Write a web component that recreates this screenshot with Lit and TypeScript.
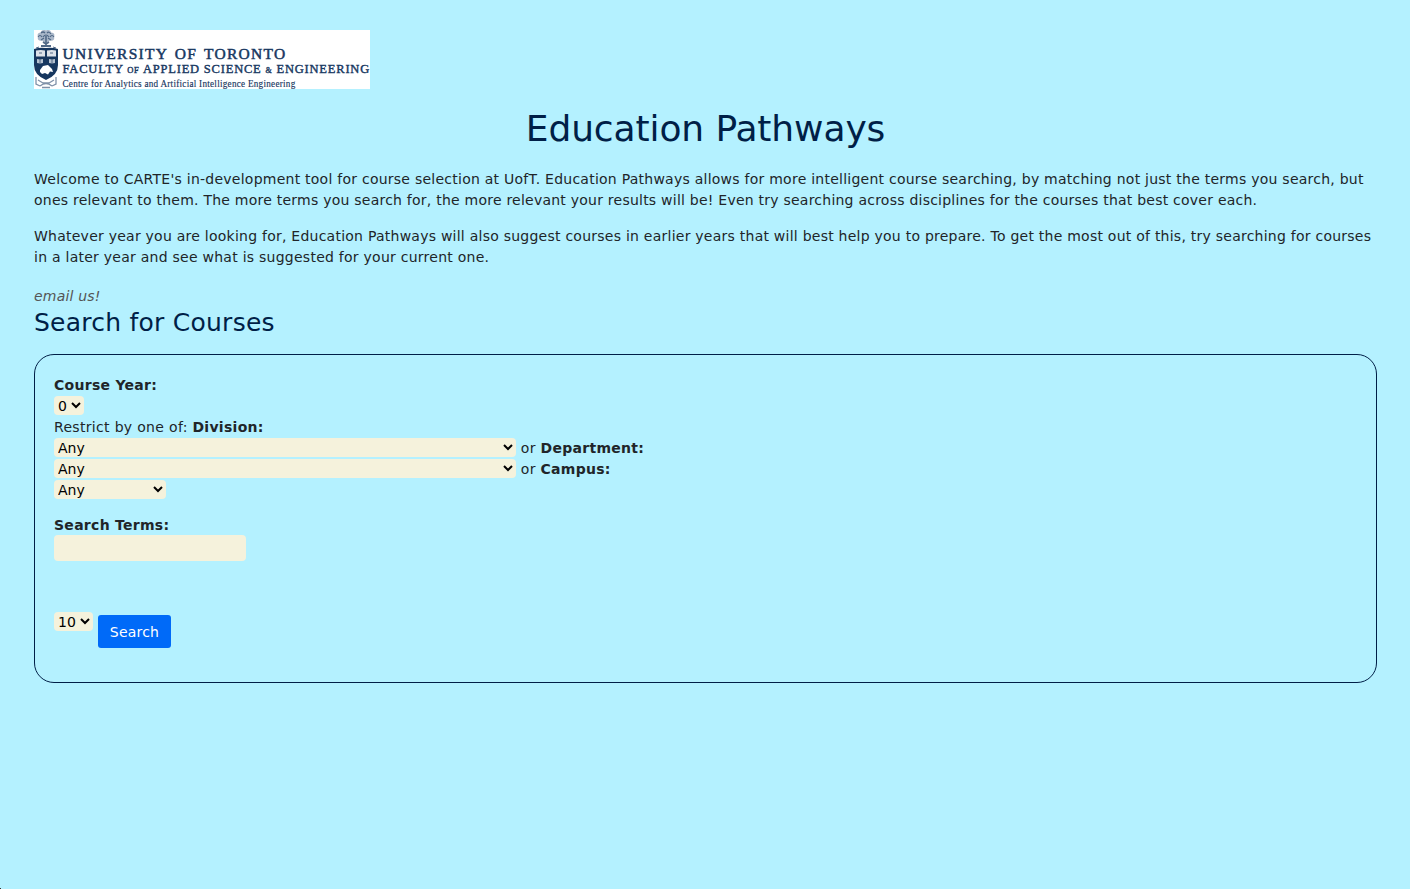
import { LitElement, html, css } from "lit";
import { customElement } from "lit/decorators.js";

@customElement("app-root")
export class AppRoot extends LitElement {
  static styles = css`
    * { box-sizing: border-box; }
    :host {
      display: block;
      min-height: 889px;
      padding: 30px 33px 0 34px;
      background: #b4f1ff;
      color: #212529;
      font: 14px/21px Verdana, "DejaVu Sans", sans-serif;
      letter-spacing: 0.28px;
    }
    .logo { display: block; width: 336px; height: 59px; background: #fff; }
    h1, h2, p { margin: 0; }
    h1 {
      margin-top: 18px;
      color: #001f47;
      font-size: 36px;
      line-height: 44px;
      font-weight: 400;
      text-align: center;
      letter-spacing: -0.1px;
    }
    .intro { margin-top: 18px; }
    .intro + .intro { margin-top: 15px; }
    .line { display: block; white-space: nowrap; }
    .l1 { letter-spacing: 0.247px; }
    .l2 { letter-spacing: 0.234px; }
    .l3 { letter-spacing: 0.243px; }
    .l4 { letter-spacing: 0.253px; }
    .mail { display: block; margin-top: 18px; color: #555; font-style: italic; letter-spacing: 0.2px; }
    h2 {
      padding-top: 1px;
      color: #001f47;
      font-size: 25px;
      line-height: 30px;
      font-weight: 400;
      letter-spacing: 0.24px;
    }
    .panel {
      height: 329px;
      margin-top: 16px;
      padding: 19px 19px;
      border: 1px solid #001f47;
      border-radius: 20px;
    }
    .row { display: flex; align-items: center; height: 21px; white-space: pre; }
    .row b, .row span { padding-top: 2px; }
    .row b { letter-spacing: 0.28px; }
    .row span { letter-spacing: 0.32px; }
    select, input {
      display: block;
      margin: 0;
      border: 0;
      border-radius: 4px;
      background: #f5f2dc;
      color: #000;
      font: 14px Verdana, "DejaVu Sans", sans-serif;
      letter-spacing: 0;
    }
    select { height: 19px; padding: 0; }
    input { width: 192px; height: 26px; }
    .year { width: 30px; }
    .wide { width: 462px; }
    .campus { width: 112px; }
    .count { width: 39px; }
    .year, .wide, .campus, .count { padding-right: 1px; }
    .terms { margin-top: 14px; }
    .actions { display: flex; gap: 5px; margin-top: 51px; }
    button {
      width: 73px;
      height: 33px;
      margin: 3px 0 0;
      padding: 2px 0 0;
      border: 0;
      border-radius: 3px;
      background: #006af8;
      color: #fff;
      font: 14px/21px Verdana, "DejaVu Sans", sans-serif;
      letter-spacing: 0.2px;
    }
    .corner { position: absolute; left: 0; top: 888px; width: 1px; height: 1px; background: #333; }
  `;

  render() {
    return html`
      <svg class="logo" viewBox="0 0 336 59" fill="#17375f">
        <path d="M12 .5c3-1 5 0 5 2 3 0 4 2 3 4 1 3-1 5-4 4-2 2-6 2-8 0-3 1-5-1-4-4-1-2 0-4 3-4 0-2 2-3 5-2z" fill="#a9b7c9" />
        <g stroke="#506886" fill="none" stroke-width="1">
          <path d="M7 3q2-2 4 0M13 3q2-2 4 1M4 7q2-3 4 0M9 7q3-4 6 0M16 7q2-3 4 0M7 10l3-2M17 10l-3-2" stroke-width="1.200" />
          <path d="M12 6v9M9 12l3 2 3-2" stroke-width="1.600" />
          <path d="M7 16h10" stroke-width="2" />
          <path d="M2 18l3-1M22 18l-3-1" />
        </g>
        <path d="M0 19q6-2 12-1 6-1 12 1v16q0 10-12 15Q0 45 0 35z" />
        <path d="M2 20.500q5-1 9 0v6H2zM13 20.500q5-1 9 0v6h-9z" fill="#dce2ea" />
        <path d="M5 23h3M16 23h3" stroke="#8294ab" stroke-width="1.500" />
        <path d="M3 29l3 .5 3-.5v4l-3 .5-3-.5zM15 29l3 .5 3-.5v4l-3 .5-3-.5z" fill="#b6c2d0" />
        <path d="M6 29v5M18 29v5" stroke="#506886" />
        <path d="M6 40l3-4 5-1 4 4 1 3-3-.5-2 3-3-1.500-3 1-2-2z" fill="#fff" />
        <g fill="none" stroke="#7f91a8" stroke-width="1.300">
          <path d="M2 47v7l4 2M22 47v7l-4 2M4 50l5 3M20 50l-5 3M6 56q6-5 12 0M9 53h6M8 57.500h8" />
        </g>
        <g font-family="'Liberation Serif', serif">
          <text x="28.500" y="29" font-size="15.500" textLength="223" word-spacing="2" stroke="#17375f" stroke-width=".5">UNIVERSITY OF TORONTO</text>
          <text x="28.500" y="43" font-size="12.500" textLength="307" stroke="#17375f" stroke-width=".4">FACULTY <tspan font-size="8.500">OF</tspan> APPLIED SCIENCE <tspan font-size="8">&amp;</tspan> ENGINEERING</text>
          <text x="28.500" y="56.500" font-size="10" textLength="233" lengthAdjust="spacingAndGlyphs" stroke="#17375f" stroke-width=".15">Centre for Analytics and Artificial Intelligence Engineering</text>
        </g>
      </svg>
      <h1>Education Pathways</h1>
      <p class="intro">
        <span class="line l1">Welcome to CARTE's in-development tool for course selection at UofT. Education Pathways allows for more intelligent course searching, by matching not just the terms you search, but</span>
        <span class="line l2">ones relevant to them. The more terms you search for, the more relevant your results will be! Even try searching across disciplines for the courses that best cover each.</span>
      </p>
      <p class="intro">
        <span class="line l3">Whatever year you are looking for, Education Pathways will also suggest courses in earlier years that will best help you to prepare. To get the most out of this, try searching for courses</span>
        <span class="line l4">in a later year and see what is suggested for your current one.</span>
      </p>
      <span class="mail">email us!</span>
      <h2>Search for Courses</h2>
      <div class="panel">
        <div class="row"><b>Course Year:</b></div>
        <div class="row"><select class="year"><option>0</option></select></div>
        <div class="row"><span>Restrict by one of: </span><b>Division:</b></div>
        <div class="row"><select class="wide"><option>Any</option></select><span> or </span><b>Department:</b></div>
        <div class="row"><select class="wide"><option>Any</option></select><span> or </span><b>Campus:</b></div>
        <div class="row"><select class="campus"><option>Any</option></select></div>
        <div class="row terms"><b>Search Terms:</b></div>
        <input type="text" />
        <div class="actions">
          <select class="count"><option>10</option></select>
          <button>Search</button>
        </div>
      </div>
      <div class="corner"></div>
    `;
  }
}
